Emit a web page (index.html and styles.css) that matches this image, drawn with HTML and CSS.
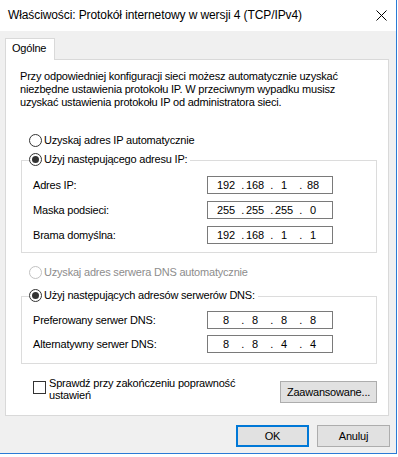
FILE: index.html
```html
<!DOCTYPE html>
<html lang="pl">
<head>
    <meta charset="UTF-8">
    <title>Właściwości: Protokół internetowy w wersji 4 (TCP/IPv4)</title>
    <link rel="stylesheet" href="styles.css">
</head>
<body>
    <div class="window">
        <div class="titlebar">
            <span class="title">Właściwości: Protokół internetowy w wersji 4 (TCP/IPv4)</span>
            <svg class="close" width="11" height="11" viewBox="0 0 11 11">
                <path d="M0.5 0.5 L10.5 10.5 M10.5 0.5 L0.5 10.5" stroke="#000" stroke-width="1" fill="none"/>
            </svg>
        </div>

        <div class="content">
            <div class="tab">Ogólne</div>

            <div class="panel">
                <p class="desc">Przy odpowiedniej konfiguracji sieci możesz automatycznie uzyskać<br>niezbędne ustawienia protokołu IP. W przeciwnym wypadku musisz<br>uzyskać ustawienia protokołu IP od administratora sieci.</p>

                <div class="radio first"><span class="dot"></span>Uzyskaj adres IP automatycznie</div>

                <fieldset class="group ip-group">
                    <legend><div class="radio"><span class="dot on"></span>Użyj następującego adresu IP:</div></legend>
                    <div class="row">
                        <span class="label">Adres IP:</span>
                        <div class="ip"><span>192</span><i>.</i><span>168</span><i>.</i><span>1</span><i>.</i><span>88</span></div>
                    </div>
                    <div class="row">
                        <span class="label">Maska podsieci:</span>
                        <div class="ip"><span>255</span><i>.</i><span>255</span><i>.</i><span>255</span><i>.</i><span>0</span></div>
                    </div>
                    <div class="row">
                        <span class="label">Brama domyślna:</span>
                        <div class="ip"><span>192</span><i>.</i><span>168</span><i>.</i><span>1</span><i>.</i><span>1</span></div>
                    </div>
                </fieldset>

                <div class="radio disabled"><span class="dot"></span>Uzyskaj adres serwera DNS automatycznie</div>

                <fieldset class="group dns-group">
                    <legend><div class="radio"><span class="dot on"></span>Użyj następujących adresów serwerów DNS:</div></legend>
                    <div class="row">
                        <span class="label">Preferowany serwer DNS:</span>
                        <div class="ip"><span>8</span><i>.</i><span>8</span><i>.</i><span>8</span><i>.</i><span>8</span></div>
                    </div>
                    <div class="row">
                        <span class="label">Alternatywny serwer DNS:</span>
                        <div class="ip"><span>8</span><i>.</i><span>8</span><i>.</i><span>4</span><i>.</i><span>4</span></div>
                    </div>
                </fieldset>

                <div class="options">
                    <div class="check"><span class="box"></span><span>Sprawdź przy zakończeniu poprawność<br>ustawień</span></div>
                    <button class="btn advanced">Zaawansowane...</button>
                </div>
            </div>

            <div class="footer">
                <button class="btn ok">OK</button>
                <button class="btn">Anuluj</button>
            </div>
        </div>
    </div>
</body>
</html>
```

FILE: styles.css
```css
* {
    box-sizing: border-box;
}

body {
    margin: 0;
    background: #fff;
    font-family: "Liberation Sans", Arial, sans-serif;
    font-size: 11px;
    line-height: 13px;
    letter-spacing: -0.2px;
    color: #000;
}

/* Window frame */
.window {
    width: 397px;
    height: 454px;
    background: #f0f0f0;
    border-right: 1px solid #2b7bd5;
    border-bottom: 1px solid #2b7bd5;
    display: flex;
    flex-direction: column;
}

.titlebar {
    height: 31px;
    background: #fff;
    display: flex;
    align-items: center;
    padding: 0 9px 0 8px;
}

.title {
    font-size: 12px;
    letter-spacing: -0.1px;
}

.close {
    margin-left: auto;
    display: block;
}

.content {
    padding: 7px 7px 0 5px;
}

/* Tab */
.tab {
    position: relative;
    width: 50px;
    height: 22px;
    margin-bottom: -1px;
    padding: 3px 0 0 6px;
    background: #fff;
    border: 1px solid #d9d9d9;
    border-bottom: none;
}

.panel {
    height: 357px;
    background: #fff;
    border: 1px solid #d9d9d9;
    padding: 10px 11px 0 15px;
}

.desc {
    margin: 0 0 0 -1px;
}

/* Radio buttons */
.radio {
    display: flex;
    align-items: center;
    height: 16px;
}

.radio.first {
    margin: 23px 0 0 8px;
}

.radio.disabled {
    margin: 11px 0 0 8px;
    color: #8d8d8d;
}

.dot {
    width: 13px;
    height: 13px;
    margin-right: 2px;
    border: 1px solid #333;
    border-radius: 50%;
    background: #fff;
    display: flex;
    align-items: center;
    justify-content: center;
}

.dot.on::after {
    content: "";
    width: 7px;
    height: 7px;
    border-radius: 50%;
    background: #333;
}

.disabled .dot {
    border-color: #c2c2c2;
}

/* Group boxes */
.group {
    margin: 0;
    min-width: 0;
    border: 1px solid #dcdcdc;
    padding: 7px 0 8px 11px;
    display: flex;
    flex-direction: column;
    gap: 7px;
}

.group legend {
    margin-left: -4px;
    padding: 0 3px 2px 0;
}

.ip-group {
    margin-top: 3px;
}

.dns-group {
    margin-top: 7px;
    padding-top: 6px;
    padding-bottom: 10px;
    gap: 6px;
}

.row {
    display: flex;
    align-items: center;
    height: 18px;
}

.label {
    width: 174px;
}

.ip {
    width: 126px;
    height: 18px;
    background: #fff;
    border: 1px solid #7a7a7a;
    padding-left: 7px;
    display: flex;
    align-items: center;
}

.ip span {
    width: 22px;
    text-align: center;
}

.ip i {
    width: 7px;
    font-style: normal;
    text-align: right;
}

/* Bottom of the tab page */
.options {
    display: flex;
    justify-content: space-between;
    align-items: flex-start;
    margin-top: 13px;
}

.check {
    display: flex;
    align-items: flex-start;
    margin-left: 12px;
    line-height: 12px;
}

.check .box {
    width: 13px;
    height: 13px;
    margin: 4px 3px 0 0;
    border: 1px solid #333;
    background: #fff;
}

/* Buttons */
.btn {
    width: 73px;
    height: 22px;
    padding: 0;
    font: inherit;
    letter-spacing: inherit;
    color: #000;
    background: #e1e1e1;
    border: 1px solid #adadad;
}

.btn.ok {
    border: 2px solid #0078d7;
}

.btn.advanced {
    width: 97px;
    margin-top: 4px;
}

.footer {
    display: flex;
    justify-content: flex-end;
    gap: 8px;
    margin: 9px -1px 0 0;
}
```
